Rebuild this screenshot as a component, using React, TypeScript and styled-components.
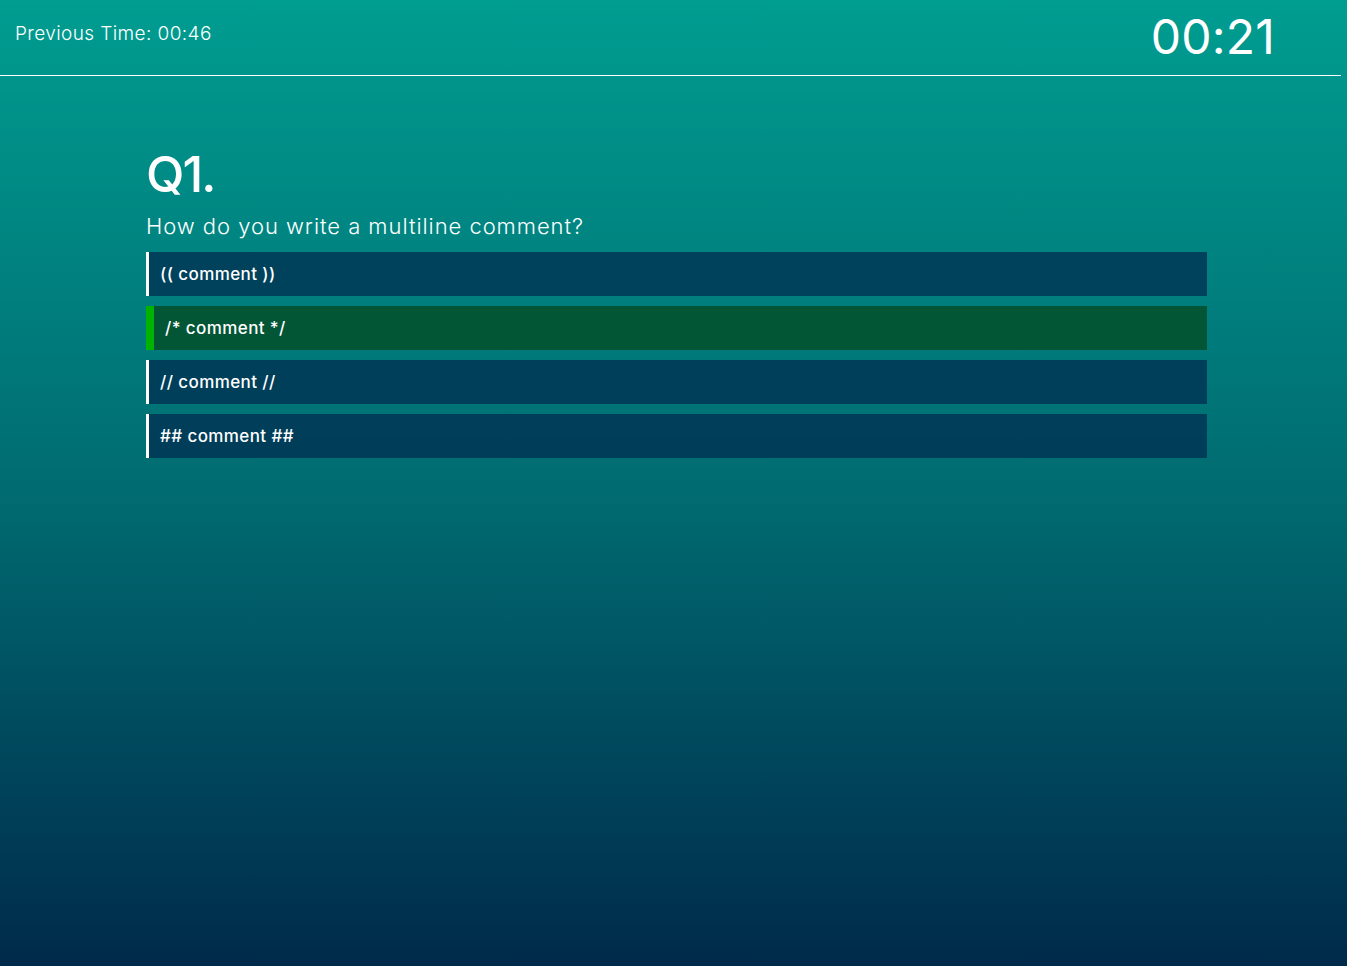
import React, { useState } from "react";
import styled, { createGlobalStyle, css } from "styled-components";

interface Option {
  id: string;
  label: string;
}

const OPTIONS: Option[] = [
  { id: "a", label: "(( comment ))" },
  { id: "b", label: "/* comment */" },
  { id: "c", label: "// comment //" },
  { id: "d", label: "## comment ##" },
];

const GlobalStyle = createGlobalStyle`
  html {
    background: #002a4b;
  }

  body {
    margin: 0;
    font-family: "Inter", "Lato", sans-serif;
    color: #fff;
  }
`;

const Page = styled.div`
  min-height: 100vh;
  box-sizing: border-box;
  background: linear-gradient(180deg, #009d91 0%, #006a70 52%, #002a4b 100%);
`;

const Header = styled.header`
  height: 75px;
  display: flex;
  align-items: center;
  justify-content: space-between;
  padding: 0 66px 0 15px;
  margin-right: 6px;
  border-bottom: 1px solid #ffffff;
`;

const PrevTime = styled.div`
  font-size: 19px;
  font-weight: 300;
  letter-spacing: 0.4px;
  margin-top: -8px;
`;

const Timer = styled.div`
  font-size: 48px;
  font-weight: 400;
  letter-spacing: 0.2px;
  margin-top: -2px;
`;

const Main = styled.main`
  width: 1061px;
  padding: 68px 0 0 146px;
`;

const QNumber = styled.h1`
  margin: 0;
  font-size: 50px;
  font-weight: 500;
  line-height: 60px;
  letter-spacing: -2px;
`;

const QText = styled.p`
  margin: 8px 0 12px;
  font-size: 22px;
  font-weight: 300;
  line-height: 28px;
  letter-spacing: 0.95px;
`;

const OptionList = styled.ul`
  list-style: none;
  margin: 0;
  padding: 0;
  display: flex;
  flex-direction: column;
  gap: 10px;
`;

const OptionItem = styled.li<{ $selected: boolean }>`
  height: 44px;
  display: flex;
  align-items: center;
  box-sizing: border-box;
  padding-left: 11px;
  border-left: 3px solid #ffffff;
  background: rgba(0, 48, 82, 0.78);
  font-size: 17px;
  font-weight: 500;
  letter-spacing: 0.4px;
  cursor: pointer;

  ${({ $selected }) =>
    $selected &&
    css`
      border-left: 8px solid #00b300;
      background: #025636;
    `}
`;

const App = () => {
  const [selected, setSelected] = useState("b");

  return (
    <>
      <GlobalStyle />
      <Page>
        <Header>
          <PrevTime>Previous Time: 00:46</PrevTime>
          <Timer>00:21</Timer>
        </Header>
        <Main>
          <QNumber>Q1.</QNumber>
          <QText>How do you write a multiline comment?</QText>
          <OptionList>
            {OPTIONS.map((opt) => (
              <OptionItem
                key={opt.id}
                $selected={opt.id === selected}
                onClick={() => setSelected(opt.id)}
              >
                {opt.label}
              </OptionItem>
            ))}
          </OptionList>
        </Main>
      </Page>
    </>
  );
};

export default App;
